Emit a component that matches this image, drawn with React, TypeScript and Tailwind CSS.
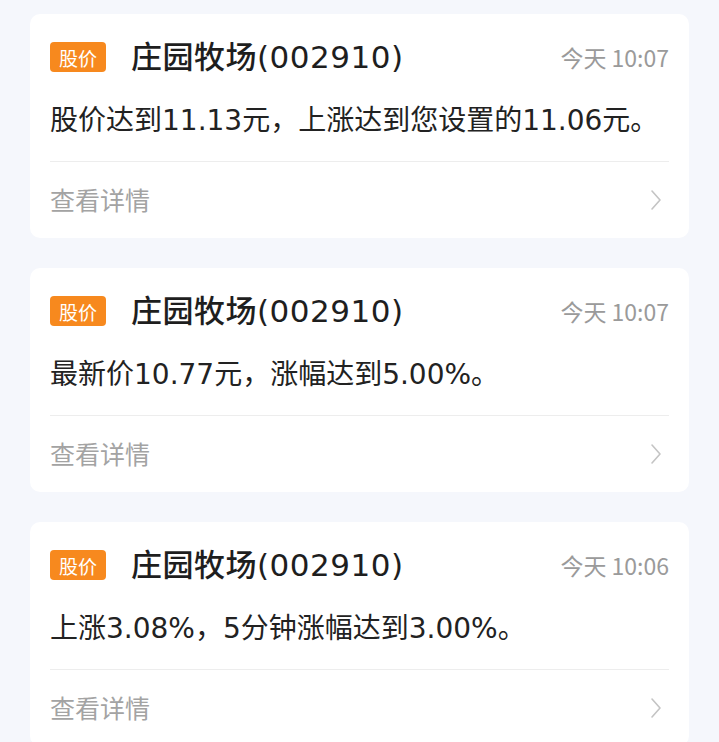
import React from 'react';

interface Alert {
  id: number;
  time: string;
  message: string;
}

const alerts: Alert[] = [
  { id: 1, time: '今天 10:07', message: '股价达到11.13元，上涨达到您设置的11.06元。' },
  { id: 2, time: '今天 10:07', message: '最新价10.77元，涨幅达到5.00%。' },
  { id: 3, time: '今天 10:06', message: '上涨3.08%，5分钟涨幅达到3.00%。' },
];

const cjk = { fontFamily: '"Noto Sans CJK SC", "Noto Sans", sans-serif' };
// the screenshot's digits are wider than the CJK font's own
const wide = { fontFamily: '"DejaVu Sans", "Noto Sans CJK SC", sans-serif' };

const AlertCard: React.FC<{ alert: Alert }> = ({ alert }) => (
  <div className="bg-white rounded-[10px] px-5 pt-[26px]">
    <div className="flex items-center h-[34px]">
      <span className="bg-[#f7891e] text-white text-[19px] leading-none rounded-[4px] w-[56px] h-[30px] flex items-center justify-center">
        股价
      </span>
      <span className="ml-[25px] text-[31px] font-medium text-[#1e1e1e] leading-none tracking-[0.5px]" style={wide}>
        庄园牧场(002910)
      </span>
      <span className="ml-auto text-[23px] text-[#9a9a9a] leading-none">{alert.time}</span>
    </div>
    <p className="mt-[29px] text-[28px] leading-[36px] text-[#222] pb-[22px] border-b border-[#ededed]" style={wide}>
      {alert.message}
    </p>
    <div className="h-[76px] flex items-center justify-between">
      <span className="text-[25px] text-[#a3a3a3]">查看详情</span>
      <svg width="14" height="22" viewBox="0 0 14 22" fill="none" className="mr-[6px]">
        <polyline points="3,2 11,11 3,20" stroke="#c4c4c4" strokeWidth="1.6" strokeLinecap="round" strokeLinejoin="round" />
      </svg>
    </div>
  </div>
);

const App: React.FC = () => {
  return (
    <div className="min-h-screen bg-[#f5f7fc] px-[30px] pt-[14px] flex flex-col gap-[30px]" style={cjk}>
      {alerts.map(a => (
        <AlertCard key={a.id} alert={a} />
      ))}
    </div>
  );
};

export default App;
